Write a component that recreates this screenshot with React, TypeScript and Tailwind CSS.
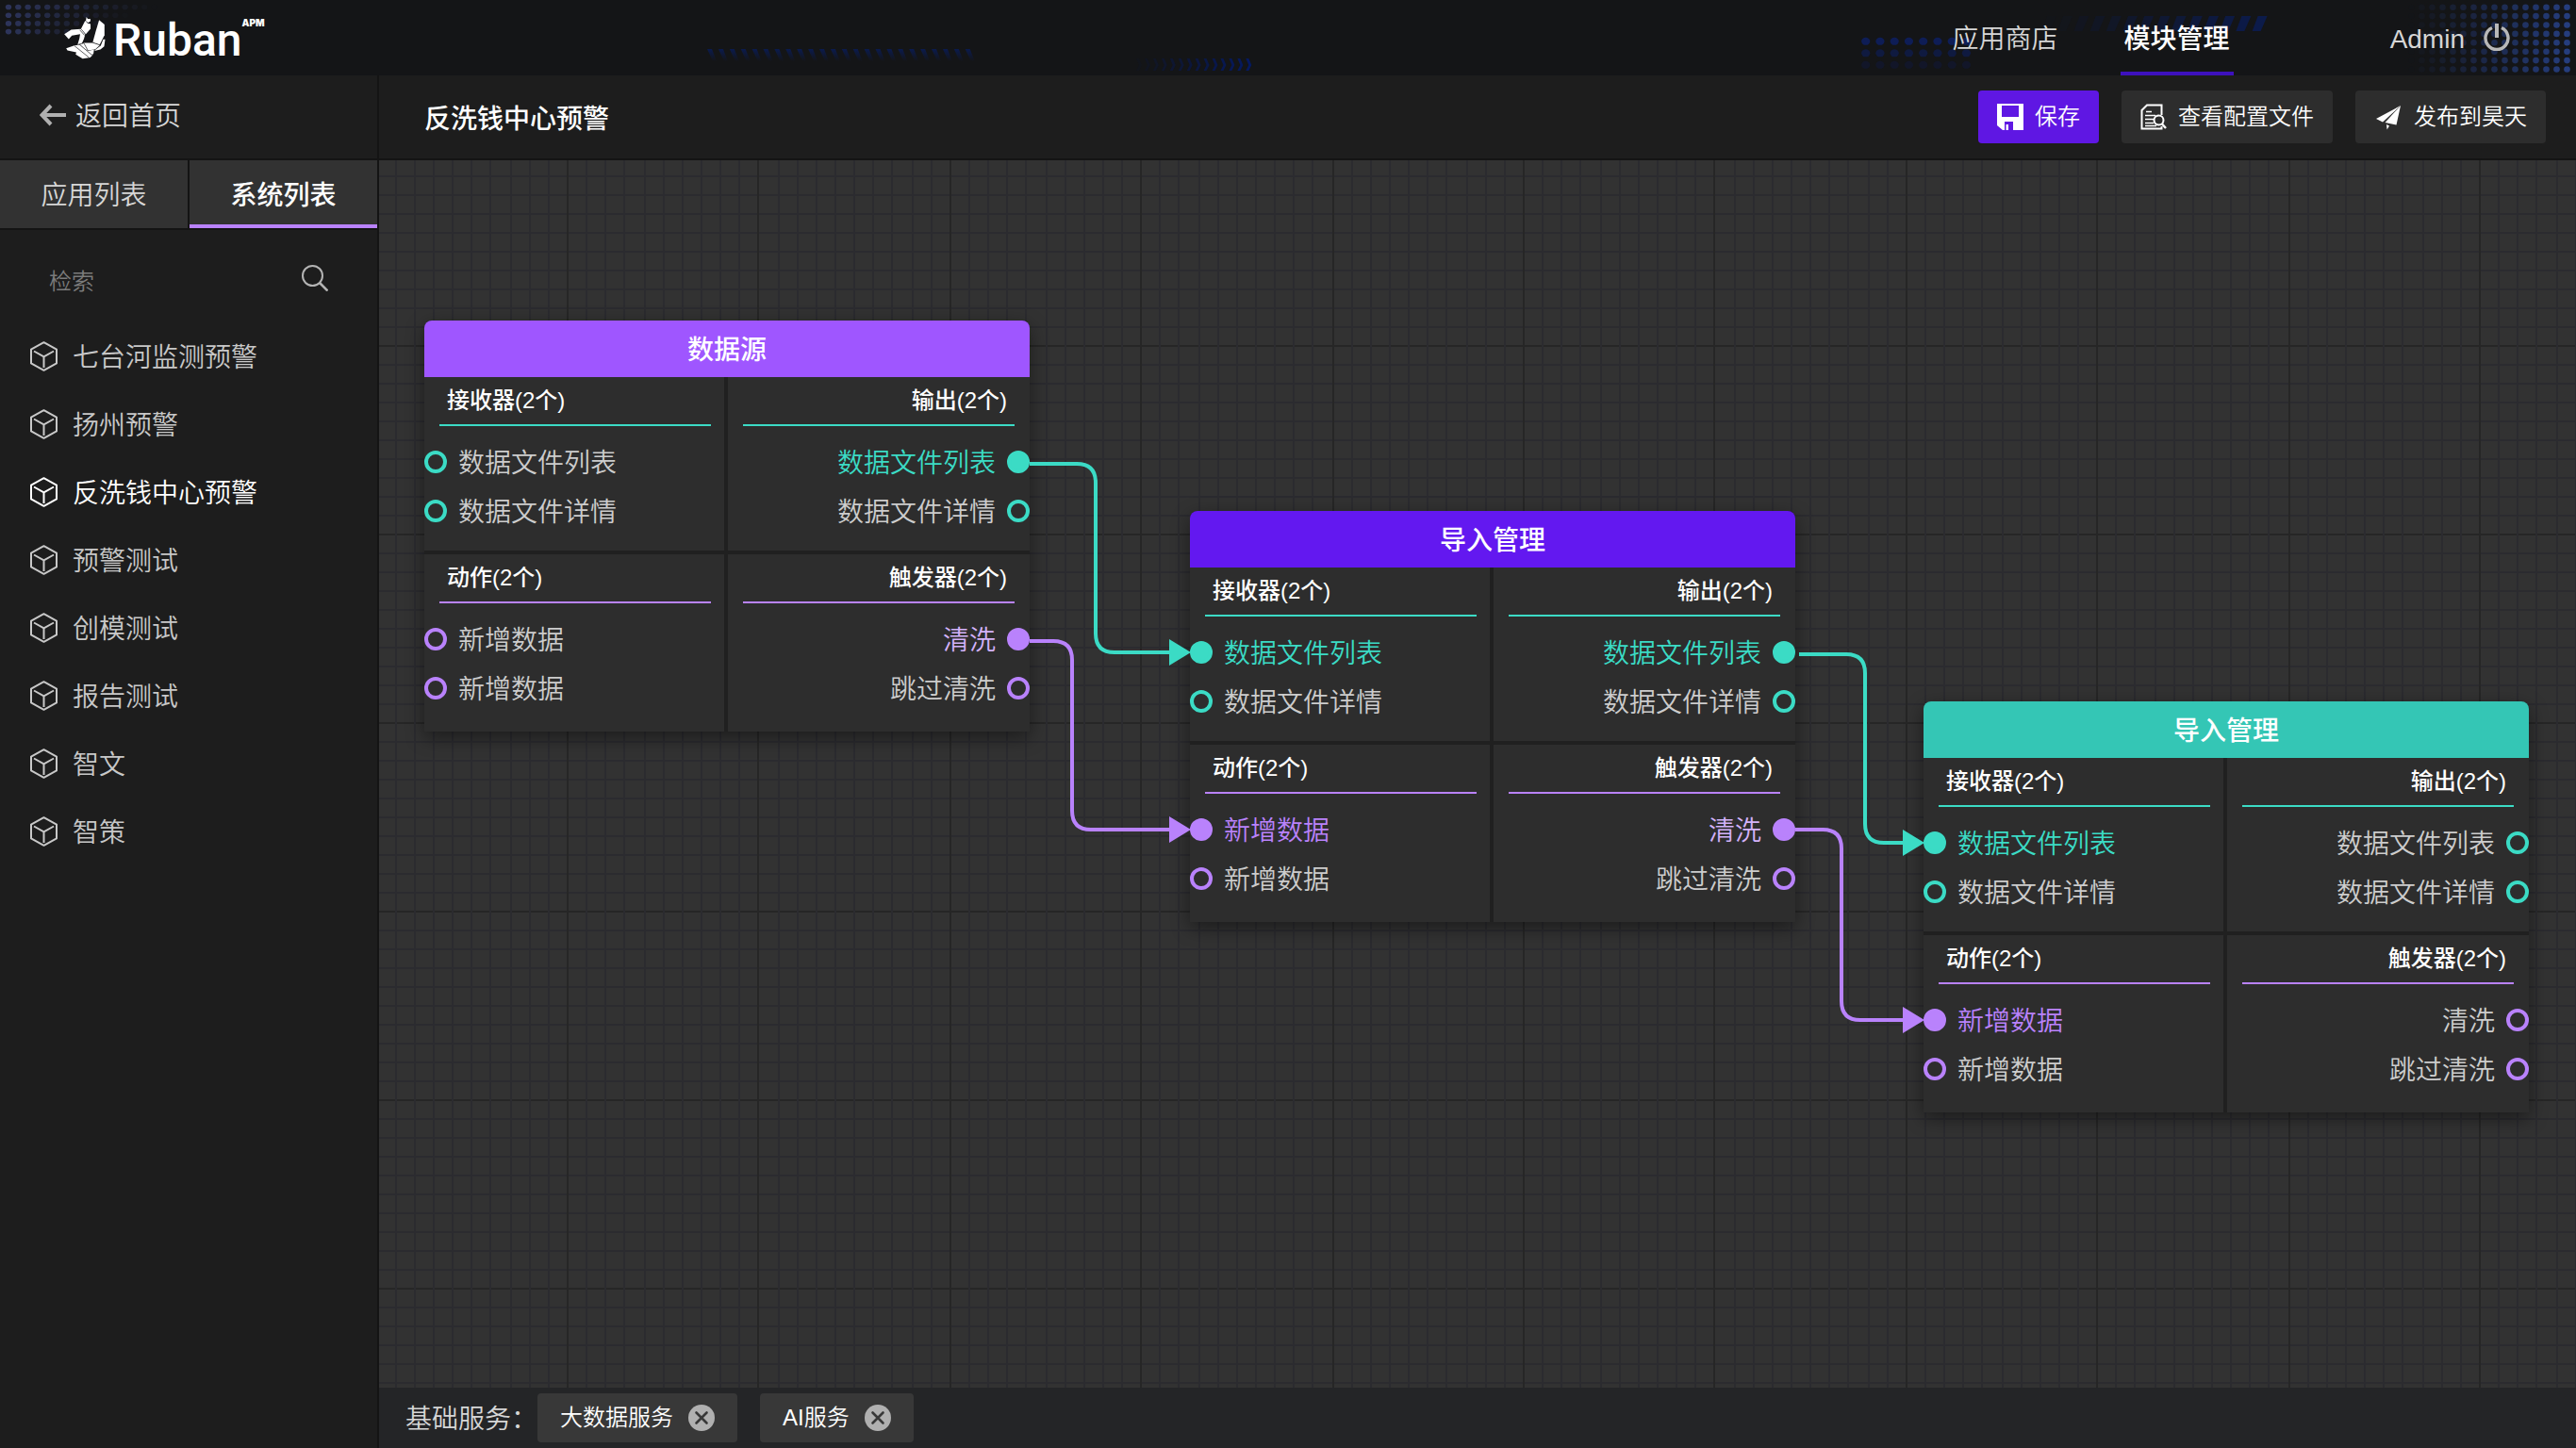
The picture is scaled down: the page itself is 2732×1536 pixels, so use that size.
import React from "react";

type Tone = "teal" | "purple";
type Port = { label: string; linked?: boolean };
type Section = { title: string; tone: Tone; side: "in" | "out"; ports: Port[] };
type NodeData = { id: string; title: string; head: string; place: string; sections: Section[] };

const TEAL = "#3bdbc5";
const PURPLE = "#b982fc";

const systems = ["七台河监测预警", "扬州预警", "反洗钱中心预警", "预警测试", "创模测试", "报告测试", "智文", "智策"];
const activeSystem = "反洗钱中心预警";
const services = ["大数据服务", "AI服务"];

function sections(recv: boolean, out: boolean, act: boolean, trig: boolean): Section[] {
  return [
    { title: "接收器(2个)", tone: "teal", side: "in", ports: [{ label: "数据文件列表", linked: recv }, { label: "数据文件详情" }] },
    { title: "输出(2个)", tone: "teal", side: "out", ports: [{ label: "数据文件列表", linked: out }, { label: "数据文件详情" }] },
    { title: "动作(2个)", tone: "purple", side: "in", ports: [{ label: "新增数据", linked: act }, { label: "新增数据" }] },
    { title: "触发器(2个)", tone: "purple", side: "out", ports: [{ label: "清洗", linked: trig }, { label: "跳过清洗" }] },
  ];
}

const nodes: NodeData[] = [
  { id: "source", title: "数据源", head: "bg-[#9f56ff]", place: "left-[48px] top-[170px]", sections: sections(false, true, false, true) },
  { id: "import-1", title: "导入管理", head: "bg-[#6318f0]", place: "left-[860px] top-[372px]", sections: sections(true, true, true, true) },
  { id: "import-2", title: "导入管理", head: "bg-[#34c6b5]", place: "left-[1638px] top-[574px]", sections: sections(true, false, true, false) },
];

const links = [
  { color: TEAL, d: "M690 322H740Q760 322 760 342V502Q760 522 780 522H842", tip: [860, 522] },
  { color: PURPLE, d: "M690 510H715Q735 510 735 530V690Q735 710 755 710H842", tip: [860, 710] },
  { color: TEAL, d: "M1506 524H1556Q1576 524 1576 544V704Q1576 724 1596 724H1620", tip: [1638, 724] },
  { color: PURPLE, d: "M1502 710H1531Q1551 710 1551 730V892Q1551 912 1571 912H1620", tip: [1638, 912] },
];

const range = (n: number) => Array.from({ length: n }, (_, i) => i);

function HeaderDecor() {
  return (
    <>
      <svg aria-hidden="true" className="absolute left-0 top-0 h-20 w-[200px]" viewBox="0 0 200 80">
        {range(4).map((r) =>
          range(16 - r * 2).map((c) => (
            <ellipse key={`${r}-${c}`} cx={9 + c * 10.3} cy={7.5 + r * 8.7} rx="3.2" ry="2.8" fill="#313a66" opacity={Math.max(0, 0.85 - c * (0.055 + r * 0.012))} />
          )),
        )}
      </svg>
      <svg aria-hidden="true" className="absolute left-[740px] top-0 h-20 w-[600px]" viewBox="0 0 600 80">
        <defs>
          <linearGradient id="slash" x1="0" y1="0" x2="0" y2="1">
            <stop offset="0" stopColor="#081c5c" stopOpacity="0.8" />
            <stop offset="1" stopColor="#081c5c" stopOpacity="0" />
          </linearGradient>
        </defs>
        {range(24).map((i) => (
          <path key={i} d={`M${10 + i * 11.9} 52h5l5 13h-4z`} fill="url(#slash)" />
        ))}
        {range(15).map((i) => (
          <path key={i} d={`M${456 + i * 8.95} 62h3l3 7l-3 6h-3l3-6z`} fill="#031a6b" opacity={i / 16} />
        ))}
      </svg>
      <svg aria-hidden="true" className="absolute right-0 top-0 h-20 w-[772px]" viewBox="0 0 772 80">
        {range(3).map((r) =>
          range(8).map((c) => <ellipse key={`${r}-${c}`} cx={18.7 + c * 15.25} cy={43.8 + r * 12.5} rx="4.6" ry="4" fill="#0c1f66" opacity={0.8 - r * 0.28} />),
        )}
        {range(14).map((i) => (
          <path key={i} d={`M${211 + i * 17.2} 17h10l-7 16h-9z`} fill="#0a1d58" opacity={0.03 + (i / 13) * 0.77} />
        ))}
        {range(8).map((r) =>
          range(16).map((c) => <circle key={`${r}-${c}`} cx={762.5 - c * 11} cy={7.7 + r * 9.4} r="3.3" fill="#28448f" opacity={Math.max(0, 0.85 - c * 0.056)} />),
        )}
      </svg>
    </>
  );
}

function Logo() {
  return (
    <a href="#home" aria-label="Ruban APM" className="relative flex items-center">
      <svg aria-hidden="true" className="h-[45px] w-[44px]" viewBox="24 25 130 134" fill="#fff">
        <path d="M94 25L98 31L107 32L106 39L99 43L92 38Z" />
        <path d="M90 37L98 45L107 47V62L92 79L77 62Z" />
        <path d="M24 79L46 65L76 63L90 80L86 94L78 112L66 113L72 92L74 79L48 84L38 95Z" />
        <path d="M134 35L151 49V82L136 112L114 105L124 68Z" />
        <path d="M74 112L86 107L113 107L136 114L122 127L100 131L90 128Z" />
        <path d="M30 124L56 115L74 113L114 145L106 153L82 157L60 143L62 137L34 131Z" />
        <path d="M88 130L100 132L118 128L116 142L112 143Z" />
        <path d="M147 96H153L150 118L138 128L119 132L124 127L139 116Z" />
        <path d="M73 66L88 83M56 116L102 153M72 112L112 146M86 108L98 130M68 112L86 107" fill="none" stroke="#141517" strokeWidth="2" />
      </svg>
      <span className="ml-2 mt-1.5 font-[Roboto] text-[48px] font-medium leading-[60px] text-white">Ruban</span>
      <span className="mb-8 self-center font-[Inter] text-[10px] font-black leading-4 text-white">APM</span>
    </a>
  );
}

function PowerIcon() {
  return (
    <svg aria-hidden="true" className="h-[30px] w-7" viewBox="0 0 28 30" fill="none" stroke="#b8b8b8">
      <path d="M9 4.5A12 12 0 1 0 19 4.5" strokeWidth="3.4" />
      <path d="M14 0V15" strokeWidth="4" />
    </svg>
  );
}

function CubeIcon() {
  return (
    <svg aria-hidden="true" className="h-8 w-[29px]" viewBox="0 0 29 32" fill="none" stroke="currentColor" strokeWidth="2" strokeLinejoin="round">
      <path d="M14.5 1.2L28 8.6V23.4L14.5 30.8L1 23.4V8.6Z" />
      <path d="M4 10.5L14.5 16.4L25 10.5M14.5 16.4V28" />
    </svg>
  );
}

function SaveIcon() {
  return (
    <svg aria-hidden="true" className="size-7" viewBox="0 0 28 28" fill="#fff">
      <path fillRule="evenodd" d="M0 0H28V28H17V19H8V28H6L0 23ZM5 2V14H23V2Z" />
      <path d="M9.5 22H12V28H9.5Z" />
    </svg>
  );
}

function FileSearchIcon() {
  return (
    <svg aria-hidden="true" className="size-7" viewBox="0 0 28 28" fill="none" stroke="#fff" strokeWidth="2">
      <path d="M22.5 12V1.5H7L1.5 7V26.5H22.5V24" />
      <path d="M6 8.5H12M5 12.5H16M5 16.5H14M5 20.5H14M5 23.5H17" strokeWidth="1.6" />
      <circle cx="19.5" cy="17.5" r="5" />
      <path d="M23 21.5L27 26" strokeWidth="2.4" />
    </svg>
  );
}

function PlaneIcon() {
  return (
    <svg aria-hidden="true" className="h-7 w-[30px]" viewBox="0 0 30 28" fill="#fff">
      <path d="M28 2L2 16L9 19.5Z" />
      <path d="M28 2L11.5 20L23.5 22.5Z" />
      <path d="M13 22L16 23.6L13.6 27.5Z" />
    </svg>
  );
}

function PortRow({ port, tone, side }: { port: Port; tone: Tone; side: "in" | "out" }) {
  const border = tone === "teal" ? "border-[#3bdbc5]" : "border-[#b982fc]";
  const fill = port.linked ? (tone === "teal" ? "bg-[#3bdbc5]" : "bg-[#b982fc]") : "";
  const lit = tone === "teal" ? "text-[#3bdbc5]" : side === "out" ? "text-[#d3b2fa]" : "text-[#b982fc]";
  return (
    <li className={`flex h-[52px] items-center gap-3 ${side === "out" ? "flex-row-reverse" : ""}`}>
      <span className={`size-6 shrink-0 rounded-full border-4 ${border} ${fill}`} />
      <span className={`pt-1 text-[28px] leading-10 ${port.linked ? lit : "text-[#cccccc]"}`}>{port.label}</span>
    </li>
  );
}

function NodeCard({ node }: { node: NodeData }) {
  return (
    <article className={`absolute w-[642px] overflow-hidden rounded-t-lg bg-[#202020] shadow-[0_6px_20px_rgba(0,0,0,0.45)] ${node.place}`}>
      <h2 className={`flex h-[60px] items-center justify-center pt-1 text-[28px] font-medium text-white ${node.head}`}>{node.title}</h2>
      <div className="grid grid-cols-[318px_320px] gap-1">
        {node.sections.map((s, i) => (
          <section key={s.title} className={`bg-[#2d2d2d] ${i < 2 ? "pb-4" : "pb-5"}`}>
            <h3
              className={`mb-3 flex h-[52px] items-center border-b-2 px-2 text-[24px] font-medium text-white ${s.tone === "teal" ? "border-[#3bdbc5]" : "border-[#b982fc]"} ${
                s.side === "out" ? "mx-4 justify-end" : "ml-4 mr-[14px]"
              }`}
            >
              {s.title}
            </h3>
            <ul>
              {s.ports.map((p, j) => (
                <PortRow key={j} port={p} tone={s.tone} side={s.side} />
              ))}
            </ul>
          </section>
        ))}
      </div>
    </article>
  );
}

function CanvasGrid() {
  return (
    <svg aria-hidden="true" className="absolute inset-0 size-full">
      <defs>
        <pattern id="grid" x="199" y="-4" width="1014" height="200" patternUnits="userSpaceOnUse">
          {range(10).map((i) => (
            <rect key={`h${i}`} x="0" y={i * 20} width="1014" height="2" fill={i === 0 ? "#262626" : "#2b2b2f"} />
          ))}
          {range(50).map((i) => (
            <rect key={`v${i}`} x={Math.round(i * 10.14) * 2} y="0" width="2" height="200" fill={i % 10 === 0 ? "#262626" : "#2b2b2f"} />
          ))}
        </pattern>
      </defs>
      <rect width="100%" height="100%" fill="url(#grid)" />
    </svg>
  );
}

const toolButton = "flex h-14 items-center gap-3 rounded px-5 text-[24px] text-white";

export default function App() {
  return (
    <div className="flex min-h-screen flex-col bg-[#1d1d1d] font-['Liberation_Sans','Noto_Sans_CJK_SC',sans-serif] text-[28px] font-[350] text-[#d6d6d6]">
      <header className="relative flex h-20 items-center justify-between bg-[#141517] pl-[68px] pr-[70px]">
        <HeaderDecor />
        <Logo />
        <div className="relative flex h-full items-center gap-[166px]">
          <nav className="flex h-full gap-[62px]">
            <a href="#store" className="flex items-center px-1 pt-1">应用商店</a>
            <a href="#modules" aria-current="page" className="flex items-center border-b-4 border-[#3d11bd] px-1 pt-2 font-medium text-white">模块管理</a>
          </nav>
          <div className="flex items-center gap-5">
            <span className="pt-1">Admin</span>
            <button type="button" aria-label="退出"><PowerIcon /></button>
          </div>
        </div>
      </header>

      <div className="flex flex-1">
        <aside className="w-[402px] shrink-0 border-r-2 border-[#141414]">
          <a href="#back" className="flex h-[90px] items-center gap-[10px] border-b-2 border-[#141414] pb-1 pl-[42px]">
            <svg aria-hidden="true" className="h-6 w-7" viewBox="0 0 28 24" fill="none" stroke="#b0b0b0" strokeWidth="4">
              <path d="M2 12H28M12 2L2.5 12L12 22" />
            </svg>
            <span className="pt-1">返回首页</span>
          </a>
          <div role="tablist" className="flex h-[74px] border-b-2 border-[#141414]">
            <button type="button" role="tab" aria-selected="false" className="flex-1 border-r-2 border-[#141414] bg-[#323232] pt-1">应用列表</button>
            <button type="button" role="tab" aria-selected="true" className="flex-1 border-b-4 border-[#b982fc] bg-[#323232] pt-2 font-medium text-white">系统列表</button>
          </div>
          <form className="flex h-[98px] items-center px-[52px] pt-3" onSubmit={(e) => e.preventDefault()}>
            <input type="search" aria-label="检索" placeholder="检索" className="min-w-0 flex-1 bg-transparent text-[24px] outline-none placeholder:text-[#7b7b7b]" />
            <button type="submit" aria-label="搜索" className="mb-2">
              <svg aria-hidden="true" className="size-7" viewBox="0 0 28 28" fill="none" stroke="#b4b4b4" strokeWidth="2">
                <circle cx="11.5" cy="11.5" r="10.5" />
                <path d="M19 19L27.5 27.5" strokeWidth="2.6" />
              </svg>
            </button>
          </form>
          <ul>
            {systems.map((name) => (
              <li key={name}>
                <button
                  type="button"
                  className={`flex h-[72px] w-full items-center gap-4 pl-8 ${name === activeSystem ? "text-white" : "text-[#c8c8c8]"}`}
                >
                  <CubeIcon />
                  <span className="pt-1">{name}</span>
                </button>
              </li>
            ))}
          </ul>
        </aside>

        <main className="flex min-w-0 flex-1 flex-col">
          <div className="flex h-[90px] items-center justify-between border-b-2 border-[#141414] pl-12 pr-8">
            <h1 className="pt-1.5 font-medium text-white">反洗钱中心预警</h1>
            <div className="flex gap-6">
              <button type="button" className={`${toolButton} bg-[#5f17e3]`}>
                <SaveIcon />
                保存
              </button>
              <button type="button" className={`${toolButton} bg-[#2d2d2d]`}>
                <FileSearchIcon />
                查看配置文件
              </button>
              <button type="button" className={`${toolButton} bg-[#2d2d2d]`}>
                <PlaneIcon />
                发布到昊天
              </button>
            </div>
          </div>

          <div className="relative flex-1 overflow-hidden bg-[#323232]">
            <CanvasGrid />
            {nodes.map((n) => (
              <NodeCard key={n.id} node={n} />
            ))}
            <svg aria-hidden="true" className="pointer-events-none absolute inset-0 size-full">
              {links.map((l, i) => (
                <g key={i}>
                  <path d={l.d} fill="none" stroke={l.color} strokeWidth="4" />
                  <path d={`M${l.tip[0] - 22} ${l.tip[1] - 14}L${l.tip[0] + 1} ${l.tip[1]}L${l.tip[0] - 22} ${l.tip[1] + 14}Z`} fill={l.color} />
                </g>
              ))}
            </svg>
          </div>

          <footer className="flex h-16 items-center bg-[#242527] pl-7">
            <span className="pt-1">基础服务：</span>
            <ul className="flex gap-6">
              {services.map((s) => (
                <li key={s} className="flex h-[52px] items-center gap-4 rounded bg-[#383838] px-6 text-[24px] text-white">
                  {s}
                  <button type="button" aria-label={`移除${s}`}>
                    <svg aria-hidden="true" className="size-7" viewBox="0 0 28 28">
                      <circle cx="14" cy="14" r="14" fill="#b0b0b0" />
                      <path d="M8.5 8.5L19.5 19.5M19.5 8.5L8.5 19.5" stroke="#383838" strokeWidth="2.6" strokeLinecap="round" />
                    </svg>
                  </button>
                </li>
              ))}
            </ul>
          </footer>
        </main>
      </div>
    </div>
  );
}
